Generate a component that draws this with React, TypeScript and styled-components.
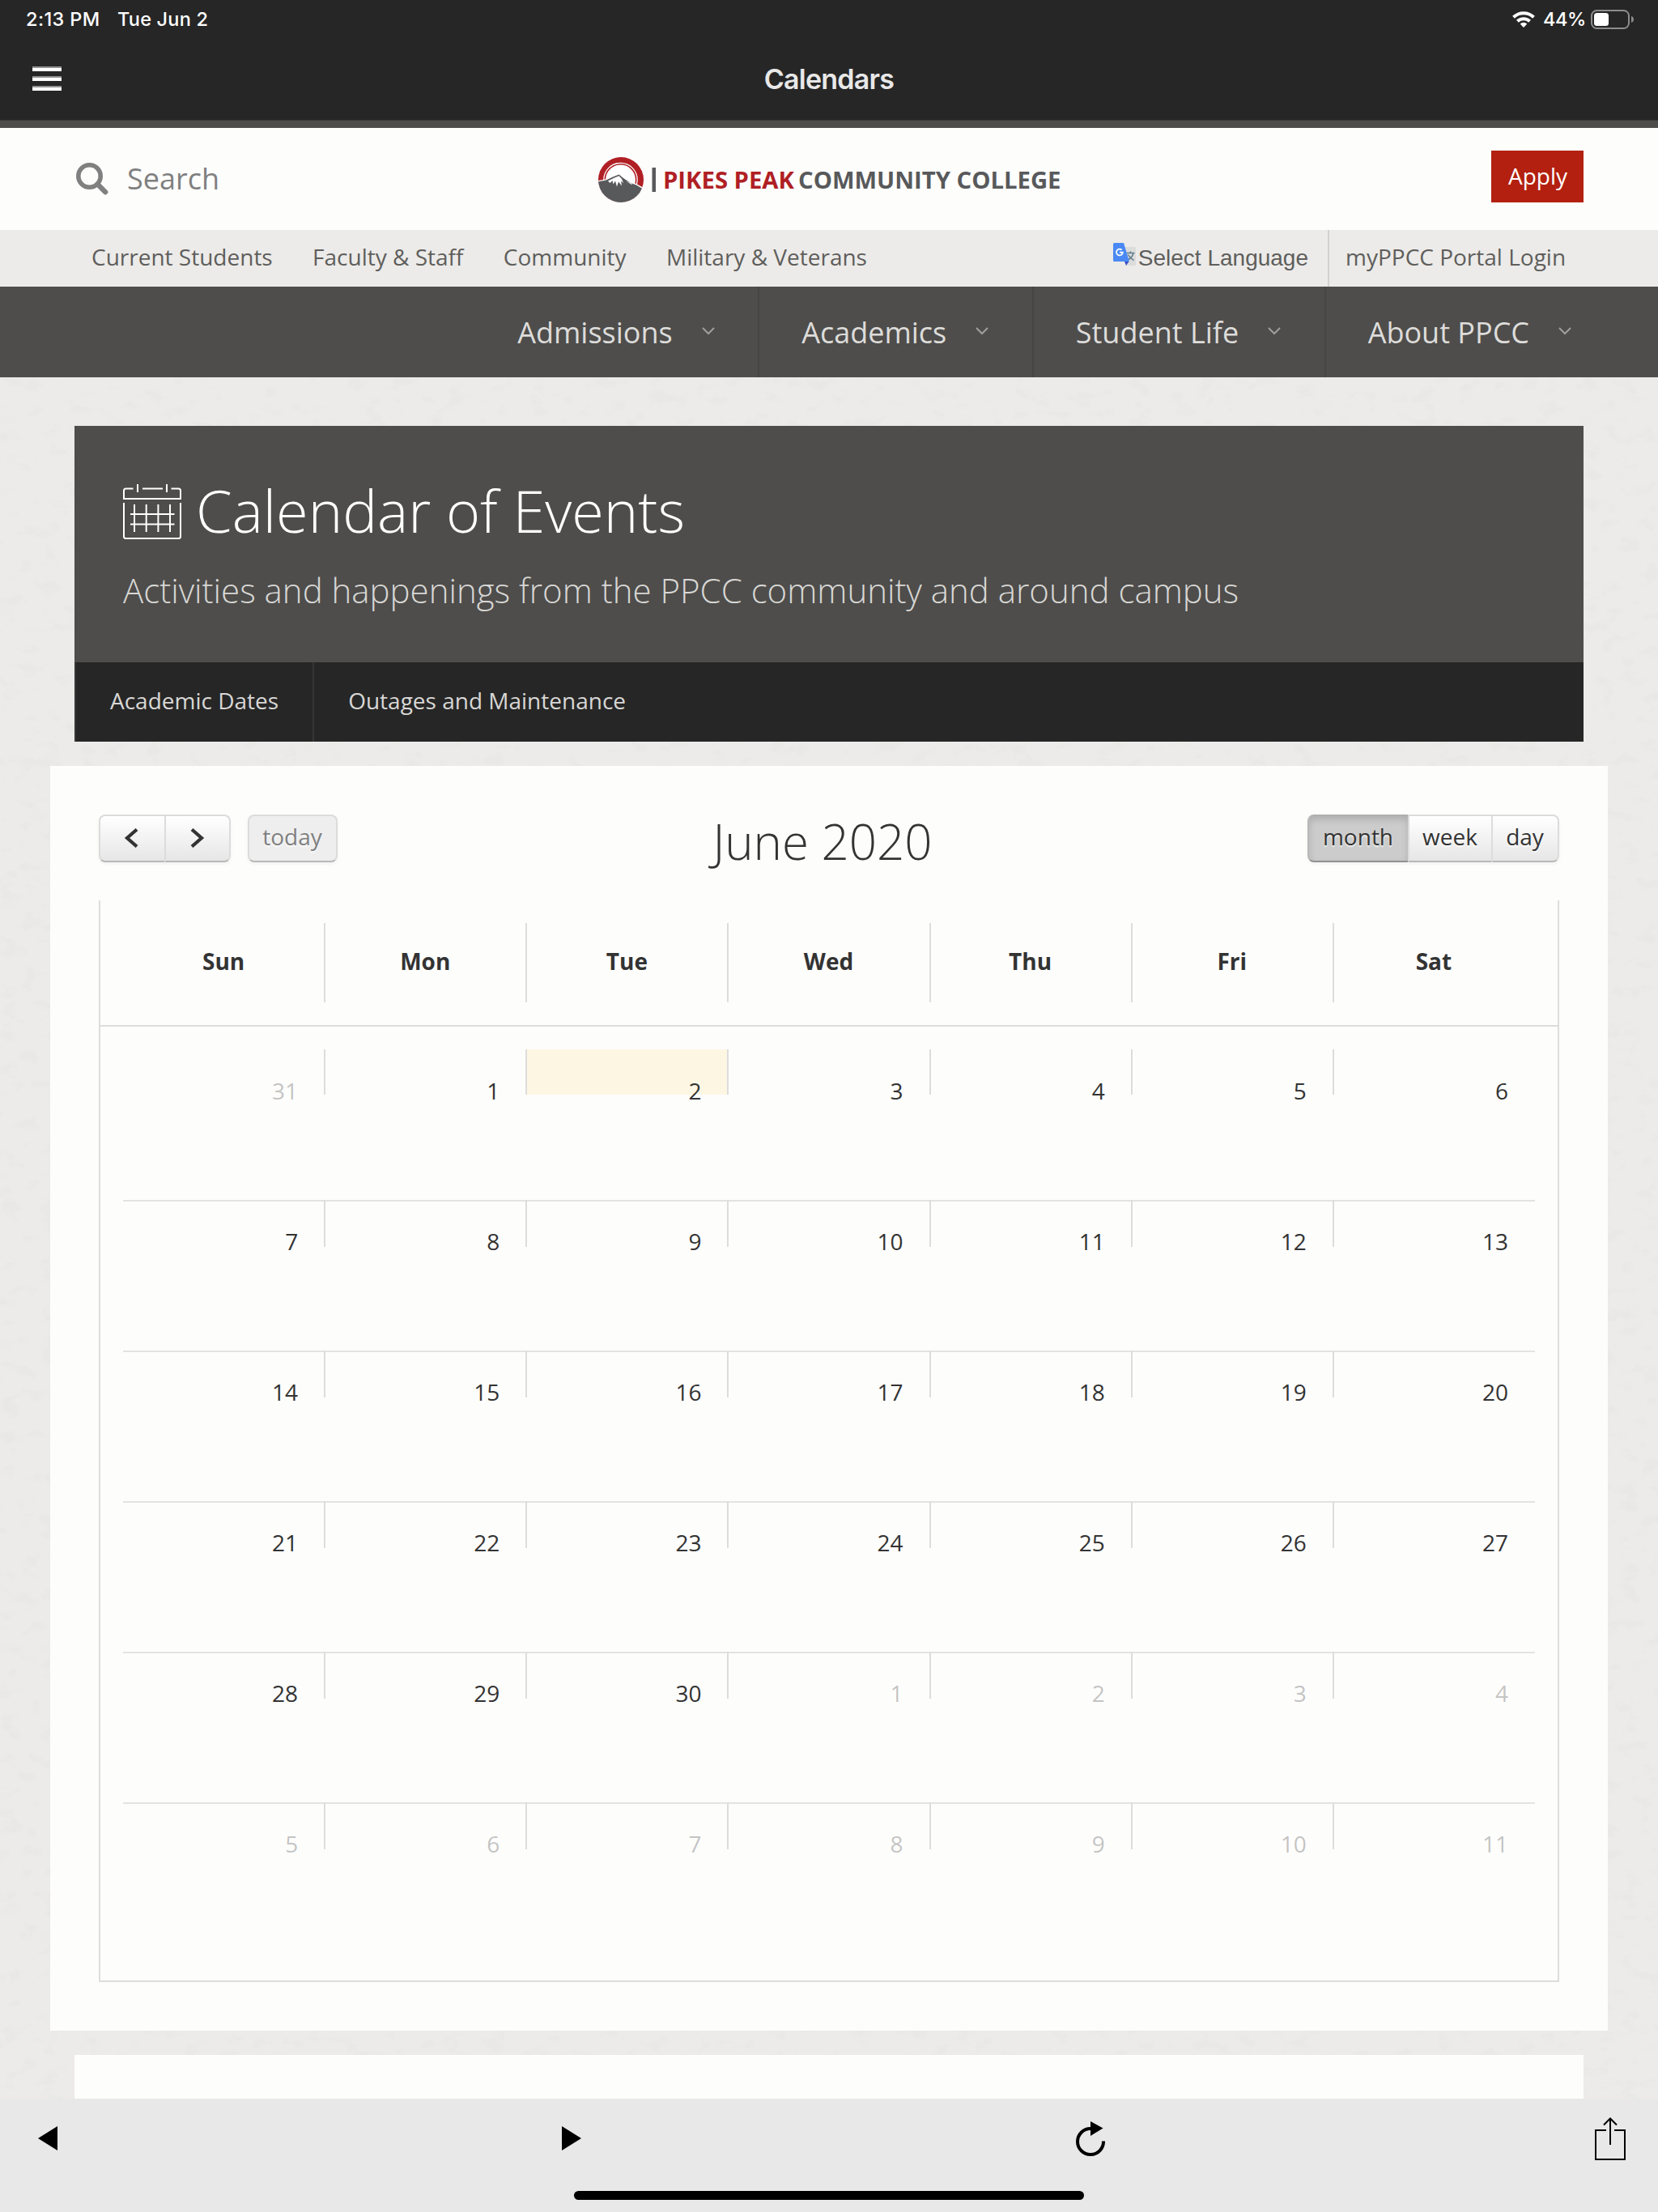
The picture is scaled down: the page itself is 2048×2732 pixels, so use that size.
import styled, { createGlobalStyle } from "styled-components";

const GlobalStyle = createGlobalStyle`
  *, *::before, *::after {
    box-sizing: border-box;
  }

  body {
    margin: 0;
    background: #ecebe9;
    color: #333;
    font-family: "Open Sans", sans-serif;
    font-size: 28px;
  }

  svg {
    display: block;
    flex: none;
  }
`;

const Screen = styled.div`
  width: 2048px;
  height: 2732px;
  display: flex;
  flex-direction: column;
  overflow: hidden;
`;

/* ---------- device + app header ---------- */

const StatusBar = styled.div`
  height: 48px;
  flex: none;
  display: flex;
  align-items: center;
  padding: 0 30px 1px 32px;
  background: #262626;
  color: #fff;
  font-family: Inter, sans-serif;
  font-size: 23.5px;
  font-weight: 500;
  line-height: 28px;
`;

const Clock = styled.span`
  width: 113px;
  letter-spacing: 0.4px;
`;

const CurrentDate = styled.span`
  letter-spacing: 0.2px;
`;

const StatusRight = styled.div`
  margin-left: auto;
  display: flex;
  align-items: center;
`;

const BatteryLevel = styled.span`
  width: 52px;
  margin: 0 7px 0 10px;
  letter-spacing: -0.4px;
`;

const AppBar = styled.div`
  height: 101px;
  flex: none;
  display: grid;
  grid-template-columns: 120px 1fr 120px;
  background: #262626;
  border-bottom: 1px solid #3a3a3a;
`;

const MenuButton = styled.div`
  display: flex;
  flex-direction: column;
  gap: 6px;
  padding: 34px 0 0 40px;

  span {
    width: 36px;
    height: 6px;
    background: #fff;
    border-top: 2px solid #929292;
  }
`;

const AppTitle = styled.div`
  padding-top: 29px;
  text-align: center;
  color: #e8e8e8;
  font-family: Inter, sans-serif;
  font-size: 34px;
  font-weight: 600;
  line-height: 42px;
  letter-spacing: -0.75px;
`;

/* ---------- site header ---------- */

const Masthead = styled.header`
  height: 135px;
  flex: none;
  display: grid;
  grid-template-columns: 647px 1fr auto;
  align-items: center;
  padding: 0 92px;
  border-top: 9px solid #4e4d4b;
  background: #fdfdfc;
`;

const SearchBox = styled.div`
  display: flex;
  align-items: center;
  gap: 23px;
  color: #808080;
  font-size: 36px;
  line-height: 40px;
  padding-left: 1px;
`;

const ApplyButton = styled.a`
  height: 64px;
  padding: 0 20px 0 21px;
  margin-bottom: 6px;
  background: #b3200f;
  color: #fff;
  line-height: 62px;
`;

const UtilityNav = styled.nav`
  height: 70px;
  flex: none;
  display: flex;
  padding-left: 113px;
  background: #ecebe9;
  color: #5f5e5c;
  line-height: 66px;
  white-space: nowrap;
`;

const UtilityLink = styled.a`
  margin-right: 49.4px;
`;

const Translate = styled.div`
  margin-left: auto;
  display: flex;
  gap: 3px;
  padding-right: 24px;
  font-family: "Liberation Sans", Arial, sans-serif;
  line-height: 69px;

  svg {
    margin-top: 16px;
  }
`;

const PortalLink = styled.a`
  width: 408px;
  padding-left: 20px;
  border-left: 2px solid #d3d2d0;
`;

const MainNav = styled.nav`
  height: 112px;
  flex: none;
  display: flex;
  justify-content: flex-end;
  padding-right: 53.5px;
  background: #4e4d4b;
  color: #dddcda;
  font-size: 36px;
  line-height: 114px;
`;

const MainNavItem = styled.a`
  display: flex;
  gap: 36px;
  padding: 0 53.5px 0 52px;

  & + & {
    border-left: 2px solid #464543;
  }

  svg {
    margin-top: 50px;
  }
`;

/* ---------- page body ---------- */

const PageArea = styled.main`
  flex: 1;
  min-height: 0;
  display: grid;
  grid-template-columns: 2048px;
  grid-template-rows: 100%;
  overflow: hidden;

  & > * {
    grid-area: 1 / 1;
  }
`;

const PageColumn = styled.div`
  position: relative;
  display: flex;
  flex-direction: column;
`;

const Hero = styled.section`
  height: 292px;
  flex: none;
  margin: 60px 92px 0;
  padding: 59px 60px 0;
  background: #4e4d4b;
  color: #fff;
`;

const HeroTitle = styled.h1`
  display: flex;
  align-items: center;
  gap: 18px;
  margin: 0;
  font-size: 72px;
  font-weight: 300;
  line-height: 90px;

  svg {
    margin-top: 3px;
  }
`;

const HeroText = styled.p`
  margin: 24px 0 0;
  color: #d8d7d5;
  font-size: 42px;
  font-weight: 300;
  line-height: 60px;
  white-space: nowrap;
`;

const HeroLinks = styled.div`
  height: 98px;
  flex: none;
  display: flex;
  margin: 0 92px;
  background: #262626;
  color: #d8d7d5;
  line-height: 94px;

  a {
    padding: 0 42px;
    border-left: 2px solid #363636;
  }
`;

const Card = styled.section`
  flex: none;
  margin: 30px 62px 0;
  padding: 60px;
  background: #fdfdfc;
`;

const NextCard = styled.section`
  flex: 1;
  margin: 30px 92px 0;
  background: #fdfdfc;
`;

const CalendarToolbar = styled.div`
  height: 66px;
  display: flex;
  justify-content: space-between;
  margin-bottom: 40px;
`;

const ToolbarSide = styled.div`
  display: flex;
  gap: 21px;
`;

const MonthTitle = styled.h2`
  margin: 0;
  font-size: 60px;
  font-weight: 300;
  line-height: 66px;
`;

const ButtonGroup = styled.div`
  display: flex;
  height: 59px;
  border-radius: 8px;
  box-shadow: 0 2px 4px rgba(0, 0, 0, 0.05);
`;

const CalButton = styled.button<{ $width: number; $state?: "active" | "disabled" }>`
  width: ${(p) => p.$width}px;
  height: 59px;
  display: flex;
  align-items: center;
  justify-content: center;
  padding: 0 1px 6px 0;
  border: 2px solid;
  border-color: ${(p) =>
    p.$state === "active" ? "#b0b0b0 #b8b8b8 #929292" : "#dcdcdc #dcdcdc #b8b8b8"};
  border-right-width: 0;
  background: ${(p) =>
    p.$state === "active"
      ? "#cccccc"
      : p.$state === "disabled"
        ? "#eeeeee"
        : "linear-gradient(#ffffff, #e6e6e6)"};
  box-shadow: ${(p) =>
    p.$state === "active" ? "inset 0 4px 8px rgba(0, 0, 0, 0.15)" : "none"};
  color: ${(p) => (p.$state === "disabled" ? "#808080" : "#333")};
  font: inherit;
  text-shadow: 0 2px 2px rgba(255, 255, 255, 0.75);

  &:first-child {
    border-radius: 8px 0 0 8px;
  }

  &:last-child {
    border-right-width: 2px;
    border-radius: 0 8px 8px 0;
  }

  &:only-child {
    border-radius: 8px;
  }
`;

const MonthGrid = styled.div`
  height: 1336px;
  border: 2px solid #ddd;
  border-top: 0;
`;

const WeekdayRow = styled.div`
  height: 156px;
  display: grid;
  grid-template-columns: repeat(7, 1fr);
  padding: 28px;
  border-bottom: 2px solid #ddd;
`;

const Weekday = styled.div`
  margin-left: -1px;
  font-weight: 700;
  line-height: 95px;
  text-align: center;

  & + & {
    padding-right: 2px;
    border-left: 2px solid #ddd;
  }
`;

const Weeks = styled.div`
  padding: 28px 28px 0;
`;

const WeekRow = styled.div`
  height: 186px;
  display: grid;
  grid-template-columns: repeat(7, 1fr);

  & + & {
    border-top: 2px solid #e3e3e3;
  }
`;

const DayCell = styled.div<{ $muted: boolean; $today: boolean; $first: boolean }>`
  height: ${(p) => (p.$first ? 56 : 58)}px;
  margin-left: -1px;
  margin-top: ${(p) => (p.$first ? 0 : -2)}px;
  padding: 32px 33px 0 0;
  background: ${(p) => (p.$today ? "#fdf6e3" : "none")};
  color: ${(p) => (p.$muted ? "rgba(51, 51, 51, 0.3)" : "#333")};
  line-height: 38px;
  text-align: right;

  & + & {
    border-left: 2px solid #ddd;
  }
`;

/* ---------- browser toolbar ---------- */

const BottomBar = styled.footer`
  height: 140px;
  flex: none;
  display: flex;
  flex-direction: column;
  align-items: center;
  background: #e8e8e8;
`;

const BottomActions = styled.div`
  width: 100%;
  height: 114px;
  display: grid;
  grid-template-columns: 647px 635px 641px 40px;
  align-items: start;
  padding: 23px 0 0 47px;

  svg:nth-child(1),
  svg:nth-child(2) {
    margin-top: 11px;
  }

  svg:nth-child(3) {
    margin-top: 5px;
  }
`;

const HomeIndicator = styled.div`
  width: 630px;
  height: 11px;
  border-radius: 6px;
  background: #000;
`;

/* ---------- drawings ---------- */

const PaperTexture = () => (
  <svg width="2048" height="2126" aria-hidden="true">
    <filter id="paper" x="0" y="0" width="100%" height="100%">
      <feTurbulence type="fractalNoise" baseFrequency="0.04 0.06" numOctaves="6" seed="8" />
      <feColorMatrix values="0 0 0 0 0.78  0 0 0 0 0.775  0 0 0 0 0.77  6 0 0 0 -3.35" />
    </filter>
    <rect width="2048" height="2126" fill="#ecebe9" />
    <rect width="2048" height="2126" filter="url(#paper)" opacity="0.35" />
  </svg>
);

const WifiIcon = () => (
  <svg width="28" height="20" viewBox="0 0 28 20" fill="none" stroke="#fff" strokeWidth="4">
    <path d="M1.5 7.2a18 18 0 0 1 25 0" />
    <path d="M6.4 12.2a11 11 0 0 1 15.2 0" />
    <path d="M14 20l-4.3-4.5a6.3 6.3 0 0 1 8.6 0z" fill="#fff" stroke="none" />
  </svg>
);

const BatteryIcon = () => (
  <svg width="53" height="24" viewBox="0 0 53 24">
    <rect x="1" y="1" width="46" height="22" rx="6.5" fill="none" stroke="#8c8c8c" strokeWidth="2" />
    <rect x="4" y="4" width="18" height="16" rx="3.5" fill="#fff" />
    <path d="M50 8v8c2-.6 3-2.2 3-4s-1-3.4-3-4z" fill="#8c8c8c" />
  </svg>
);

const SearchIcon = () => (
  <svg width="41" height="40" viewBox="0 0 41 40" fill="none" stroke="#808080">
    <circle cx="17.5" cy="16.5" r="13.7" strokeWidth="5.6" />
    <path d="M27.5 26.5l9.7 9.7" strokeWidth="6.2" strokeLinecap="round" />
  </svg>
);

const CollegeLogo = () => (
  <svg width="572" height="58" viewBox="0 -2 572 58">
    <clipPath id="disc">
      <circle cx="28" cy="28" r="28" />
    </clipPath>
    <g clipPath="url(#disc)">
      <rect width="56" height="56" fill="#b01f24" />
      <circle cx="27.5" cy="28" r="21.3" fill="#fff" />
      <circle cx="27.5" cy="28" r="19.2" fill="#fff" stroke="#b01f24" strokeWidth="1.6" />
      <path d="M0 29l9-1.500 9-4.200 7.500-2.300 5.500 3.500 9 6.500 7 2 9 5v20H0z" fill="#fff" />
      <path
        d="M0 30.200l9-1.500 9-4.200 7.500-3 5.500 4.500 9 6 7 2.500 9 5.500v20H0z"
        fill="#58595b"
      />
      <path
        d="M12 29.500l8-4 5.500-2.300 3.500 3.800 2 5-3-2.500 1 6-4-5-2 6-2-7-2.500 4-1-4.500-3 3zM34 29.500l8 5-1-2z"
        fill="#fff"
      />
    </g>
    <rect x="66.5" y="13" width="4.500" height="30" fill="#58595b" />
    <g fontFamily="Open Sans, sans-serif" fontWeight="700" fontSize="28.5">
      <text x="80" y="38.600" fill="#b01f24" textLength="162" lengthAdjust="spacingAndGlyphs">
        PIKES PEAK
      </text>
      <text x="247" y="38.600" fill="#58595b" textLength="324.500" lengthAdjust="spacingAndGlyphs">
        COMMUNITY COLLEGE
      </text>
    </g>
  </svg>
);

const TranslateIcon = () => (
  <svg width="28" height="28" viewBox="0 0 28 28">
    <path d="M11 5h15.500q1.500 0 1.500 1.500v20q0 1.500-1.500 1.500H16z" fill="#dcdcdc" />
    <path
      d="M16.500 12.500h10M21.500 10.500v2M25 12.500c-1 4-4 7-7 8.500M18.500 14.500c1.500 3 4 5.500 7 7"
      fill="none"
      stroke="#607d8b"
      strokeWidth="1.5"
    />
    <path d="M14 23h5.500L16 28z" fill="#3a4fc4" />
    <path d="M1.500 0H13l7 23H1.500Q0 23 0 21.500v-20Q0 0 1.500 0z" fill="#4a89f3" />
    <path
      d="M10.600 8.700a3.900 3.900 0 1 0 1.200 2.900H8"
      fill="none"
      stroke="#fff"
      strokeWidth="1.8"
    />
  </svg>
);

const ChevronDown = () => (
  <svg width="16" height="10" viewBox="0 0 16 10" fill="none" stroke="#a09f9d" strokeWidth="2">
    <path d="M1 1l7 7 7-7" />
  </svg>
);

const CalendarIcon = () => (
  <svg width="72" height="69" viewBox="0 0 72 69" fill="none" stroke="#fff" strokeWidth="2">
    <path d="M12.500 6.500H3.500Q1 6.500 1 9v10h70V9q0-2.500-2.500-2.500h-9M24 6.500h25M18 1v10M54 1v10" />
    <path d="M1 24v41.500Q1 68 3.500 68h65q2.500 0 2.500-2.500V24" />
    <path d="M14 26v34M28.700 26v34M43.400 26v34M58 26v34M9 38h54.500M9 50.500h54.500" />
  </svg>
);

const AngleIcon = styled.svg<{ $shift: number }>`
  margin: 4px ${(p) => p.$shift}px 0 0;
`;

const Angle = ({ flip }: { flip?: boolean }) => (
  <AngleIcon
    $shift={flip ? -1 : 3}
    width="18"
    height="24"
    viewBox="0 0 18 24"
    fill="none"
    stroke="#333"
    strokeWidth="4.2"
  >
    <path d={flip ? "M2 1.500l12 10.500-12 10.500" : "M16 1.500L4 12l12 10.500"} />
  </AngleIcon>
);

const BackIcon = () => (
  <svg width="24" height="30" viewBox="0 0 24 30">
    <path d="M24 0v30L0 15z" />
  </svg>
);

const ForwardIcon = () => (
  <svg width="24" height="30" viewBox="0 0 24 30">
    <path d="M0 0v30l24-15z" />
  </svg>
);

const ReloadIcon = () => (
  <svg width="36" height="43" viewBox="0 0 36 43">
    <path d="M18 9a16 16 0 1 0 16 15.500" fill="none" stroke="#000" strokeWidth="4" />
    <path d="M18 0l15.500 8.500L18 18z" />
  </svg>
);

const ShareIcon = () => (
  <svg width="38" height="53" viewBox="0 0 38 53" fill="none" stroke="#000" strokeWidth="2">
    <path d="M14 16H1v36h36V16H24" />
    <path d="M19 34V1.500M11 9.500l8-8 8 8" />
  </svg>
);

/* ---------- data ---------- */

const utilityLinks = ["Current Students", "Faculty & Staff", "Community", "Military & Veterans"];
const mainLinks = ["Admissions", "Academics", "Student Life", "About PPCC"];
const weekdays = ["Sun", "Mon", "Tue", "Wed", "Thu", "Fri", "Sat"];
const DAY_MS = 24 * 60 * 60 * 1000;
const firstDay = Date.UTC(2020, 4, 31);

const weeks = Array.from({ length: 6 }, (_, week) =>
  Array.from({ length: 7 }, (_, day) => new Date(firstDay + (week * 7 + day) * DAY_MS))
);

export default function App() {
  return (
    <Screen>
      <GlobalStyle />
      <StatusBar>
        <Clock>2:13 PM</Clock>
        <CurrentDate>Tue Jun 2</CurrentDate>
        <StatusRight>
          <WifiIcon />
          <BatteryLevel>44%</BatteryLevel>
          <BatteryIcon />
        </StatusRight>
      </StatusBar>
      <AppBar>
        <MenuButton>
          <span />
          <span />
          <span />
        </MenuButton>
        <AppTitle>Calendars</AppTitle>
      </AppBar>

      <Masthead>
        <SearchBox>
          <SearchIcon />
          Search
        </SearchBox>
        <CollegeLogo />
        <ApplyButton>Apply</ApplyButton>
      </Masthead>
      <UtilityNav>
        {utilityLinks.map((label) => (
          <UtilityLink key={label}>{label}</UtilityLink>
        ))}
        <Translate>
          <TranslateIcon />
          Select Language
        </Translate>
        <PortalLink>myPPCC Portal Login</PortalLink>
      </UtilityNav>
      <MainNav>
        {mainLinks.map((label) => (
          <MainNavItem key={label}>
            {label}
            <ChevronDown />
          </MainNavItem>
        ))}
      </MainNav>

      <PageArea>
        <PaperTexture />
        <PageColumn>
          <Hero>
            <HeroTitle>
              <CalendarIcon />
              Calendar of Events
            </HeroTitle>
            <HeroText>Activities and happenings from the PPCC community and around campus</HeroText>
          </Hero>
          <HeroLinks>
            <a>Academic Dates</a>
            <a>Outages and Maintenance</a>
          </HeroLinks>

          <Card>
            <CalendarToolbar>
              <ToolbarSide>
                <ButtonGroup>
                  <CalButton $width={81}>
                    <Angle />
                  </CalButton>
                  <CalButton $width={82}>
                    <Angle flip />
                  </CalButton>
                </ButtonGroup>
                <ButtonGroup>
                  <CalButton $width={111} $state="disabled">
                    today
                  </CalButton>
                </ButtonGroup>
              </ToolbarSide>
              <MonthTitle>June 2020</MonthTitle>
              <ButtonGroup>
                <CalButton $width={124} $state="active">
                  month
                </CalButton>
                <CalButton $width={103}>week</CalButton>
                <CalButton $width={84}>day</CalButton>
              </ButtonGroup>
            </CalendarToolbar>

            <MonthGrid>
              <WeekdayRow>
                {weekdays.map((name) => (
                  <Weekday key={name}>{name}</Weekday>
                ))}
              </WeekdayRow>
              <Weeks>
                {weeks.map((week, i) => (
                  <WeekRow key={i}>
                    {week.map((date) => (
                      <DayCell
                        key={date.getTime()}
                        $first={i === 0}
                        $muted={date.getUTCMonth() !== 5}
                        $today={date.getUTCMonth() === 5 && date.getUTCDate() === 2}
                      >
                        {date.getUTCDate()}
                      </DayCell>
                    ))}
                  </WeekRow>
                ))}
              </Weeks>
            </MonthGrid>
          </Card>
          <NextCard />
        </PageColumn>
      </PageArea>

      <BottomBar>
        <BottomActions>
          <BackIcon />
          <ForwardIcon />
          <ReloadIcon />
          <ShareIcon />
        </BottomActions>
        <HomeIndicator />
      </BottomBar>
    </Screen>
  );
}
